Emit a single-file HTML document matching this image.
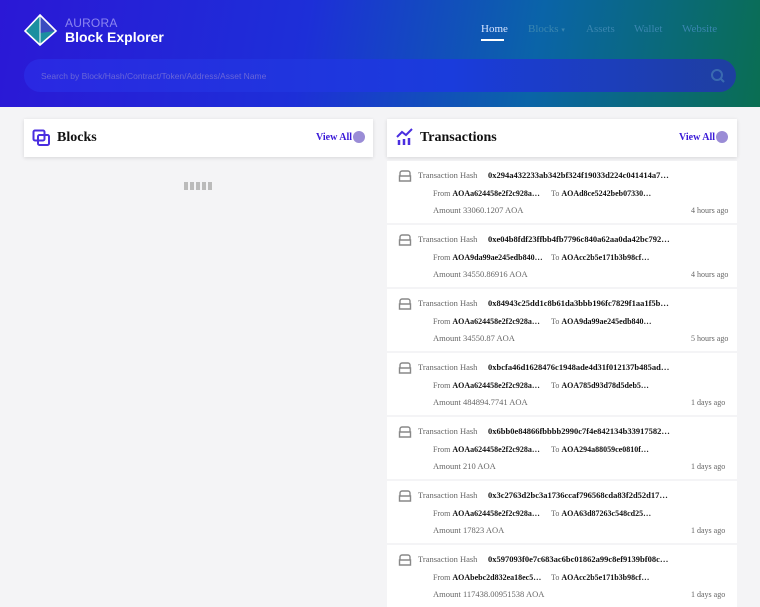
<!DOCTYPE html><html><head><meta charset="utf-8"><style>
*{margin:0;padding:0;box-sizing:border-box}
body{width:760px;height:600px;overflow:hidden;background:#f4f4f6;font-family:"Liberation Serif",serif;position:relative}
.hd{position:absolute;left:0;top:0;width:760px;height:107px;background:linear-gradient(100deg,#2b18d6 0%,#1d2fd8 40%,#0a64a8 70%,#0a6e52 100%)}
.logo{position:absolute;left:24px;top:13px}
.brand1{position:absolute;left:65px;top:16px;font:12px "Liberation Sans",sans-serif;color:#8c86f0;letter-spacing:.2px}
.brand2{position:absolute;left:65px;top:29px;font:bold 14px "Liberation Sans",sans-serif;color:#fff}
.nav{position:absolute;top:23px;font-size:11px;color:#3a86b0}
.srch{position:absolute;left:24px;top:59px;width:712px;height:33px;border-radius:17px;background:linear-gradient(90deg,#2a28e2,#1a3cdc 60%,#1e3fa0);}
.srch span{position:absolute;left:17px;top:12px;font:8.5px "Liberation Sans",sans-serif;color:#6a67d8}
.card{position:absolute;background:#fff;box-shadow:0 1px 4px rgba(0,0,0,.12)}
.ttl{position:absolute;font-weight:bold;font-size:14px;color:#111}
.va{position:absolute;font-weight:bold;font-size:10px;color:#3a1ad8}
.dot{position:absolute;width:12px;height:12px;border-radius:50%;background:#9a8cd6}
.row{position:absolute;left:387px;width:350px;height:62px;background:#fff}
.row .ic{position:absolute;left:11px;top:8px}
.row .l{position:absolute;font-size:8.5px;color:#666}
.row .b{position:absolute;font-size:8.5px;color:#111;font-weight:bold}
</style></head><body>
<div class="hd">
<svg class="logo" width="36" height="34" viewBox="0 0 36 34"><polygon points="16,2 32,18 16,32 1,18" fill="#1b8fa0"/><polygon points="16,2 32,18 16,20" fill="#3a4cc0"/><polygon points="16,2 32,18 16,32 1,18" fill="none" stroke="#fff" stroke-width="1.6"/><line x1="16" y1="2" x2="16" y2="32" stroke="#fff" stroke-width="1"/></svg>
<div class="brand1">AURORA</div><div class="brand2">Block Explorer</div>
<div class="nav" style="left:481px;color:#d8e4ff">Home</div>
<div style="position:absolute;left:481px;top:39px;width:23px;height:2px;background:#fff"></div>
<div class="nav" style="left:528px">Blocks <span style="font-size:7px">&#9662;</span></div>
<div class="nav" style="left:586px">Assets</div>
<div class="nav" style="left:634px">Wallet</div>
<div class="nav" style="left:682px">Website</div>
<div class="srch"><span>Search by Block/Hash/Contract/Token/Address/Asset Name</span>
<svg style="position:absolute;right:10px;top:9px" width="16" height="16"><circle cx="7" cy="7" r="5" fill="none" stroke="#3a6ab0" stroke-width="2"/><line x1="11" y1="11" x2="14" y2="14" stroke="#3a6ab0" stroke-width="2"/></svg></div>
</div>
<div class="card" style="left:24px;top:119px;width:349px;height:38px">
<svg style="position:absolute;left:8px;top:10px" width="18" height="18"><rect x="1.5" y="1.5" width="11" height="10" rx="1.5" fill="none" stroke="#4a2ee0" stroke-width="2"/><rect x="6" y="6" width="11" height="10" rx="1.5" fill="none" stroke="#4a2ee0" stroke-width="2"/></svg>
<div class="ttl" style="left:33px;top:11px">Blocks</div><div class="va" style="left:292px;top:13px">View All</div><div class="dot" style="left:329px;top:12px"></div></div>
<div style="position:absolute;left:184px;top:182px;width:28px;height:8px;background:repeating-linear-gradient(90deg,#bbb 0 4px,transparent 4px 6px)"></div>
<div class="card" style="left:387px;top:119px;width:350px;height:38px">
<svg style="position:absolute;left:9px;top:9px" width="18" height="18"><path d="M1 9l5-5 4 3 6-6" fill="none" stroke="#4a2ee0" stroke-width="2"/><path d="M3 17v-5M8 17v-6M13 17v-7" stroke="#4a2ee0" stroke-width="2.5"/></svg>
<div class="ttl" style="left:33px;top:11px">Transactions</div><div class="va" style="left:292px;top:13px">View All</div><div class="dot" style="left:329px;top:12px"></div></div>
<div id="rows"></div>
<script>
var d=[["0x294a432233ab342bf324f19033d224c041414a7…","AOAa624458e2f2c928a…","AOAd8ce5242beb07330…","33060.1207","4 hours ago"],
["0xe04b8fdf23ffbb4fb7796c840a62aa0da42bc792…","AOA9da99ae245edb840…","AOAcc2b5e171b3b98cf…","34550.86916","4 hours ago"],
["0x84943c25dd1c8b61da3bbb196fc7829f1aa1f5b…","AOAa624458e2f2c928a…","AOA9da99ae245edb840…","34550.87","5 hours ago"],
["0xbcfa46d1628476c1948ade4d31f012137b485ad…","AOAa624458e2f2c928a…","AOA785d93d78d5deb5…","484894.7741","1 days ago"],
["0x6bb0e84866fbbbb2990c7f4e842134b33917582…","AOAa624458e2f2c928a…","AOA294a88059ce0810f…","210","1 days ago"],
["0x3c2763d2bc3a1736ccaf796568cda83f2d52d17…","AOAa624458e2f2c928a…","AOA63d87263c548cd25…","17823","1 days ago"],
["0x597093f0e7c683ac6bc01862a99c8ef9139bf08c…","AOAbebc2d832ea18ec5…","AOAcc2b5e171b3b98cf…","117438.00951538","1 days ago"]];
var h="";d.forEach(function(r,i){var t=161+i*64;h+='<div class="row" style="top:'+t+'px"><svg class="ic" width="14" height="14"><path d="M2 7V4a2 2 0 0 1 2-2h6a2 2 0 0 1 2 2v3M1.5 7h11v5h-11z" fill="none" stroke="#888" stroke-width="1.4"/></svg><div class="l" style="left:31px;top:9px">Transaction Hash</div><div class="b" style="left:101px;top:9px">'+r[0]+'</div><div class="l" style="left:46px;top:28px;font-size:8px">From <b style="color:#111">'+r[1]+'</b></div><div class="l" style="left:164px;top:28px;font-size:8px">To <b style="color:#111">'+r[2]+'</b></div><div class="l" style="left:46px;top:44px">Amount '+r[3]+' AOA</div><div class="l" style="left:304px;top:45px;font-size:8px">'+r[4]+'</div></div>'});
document.getElementById("rows").innerHTML=h;
</script>
</body></html>
